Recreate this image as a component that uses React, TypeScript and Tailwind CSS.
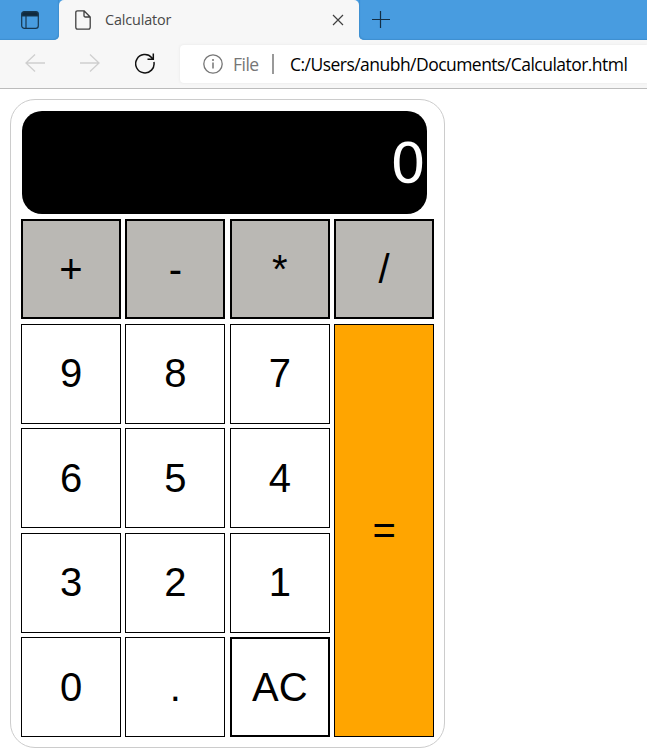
import React from "react";

type Key = { label: string; look: string };

const operator = "border-2 border-black bg-[#bab8b4]";
const plain = "border border-black bg-white";

const keys: Key[] = [
  { label: "+", look: operator },
  { label: "-", look: operator },
  { label: "*", look: operator },
  { label: "/", look: operator },
  { label: "9", look: plain },
  { label: "8", look: plain },
  { label: "7", look: plain },
  { label: "=", look: "row-span-4 border border-black bg-[#ffa500]" },
  { label: "6", look: plain },
  { label: "5", look: plain },
  { label: "4", look: plain },
  { label: "3", look: plain },
  { label: "2", look: plain },
  { label: "1", look: plain },
  { label: "0", look: plain },
  { label: ".", look: plain },
  { label: "AC", look: "border-2 border-black bg-white" },
];

function TabStrip() {
  return (
    <div className="flex h-10 bg-[#f7f7f7]">
      <div className="flex h-10 w-[59px] items-start rounded-br-[5px] bg-[#489ce0] pl-[21px] pt-[11px] shadow-[inset_-1px_-1px_1px_#3f90d0]">
        <svg width="18" height="18" viewBox="0 0 18 18" fill="none" stroke="#16364f" strokeWidth="1.2">
          <rect x="0.7" y="0.7" width="16.6" height="16.6" rx="2.6" />
          <path d="M1 5V3Q1 1 3 1H15Q17 1 17 3V5Z" fill="#10293d" />
          <path d="M5 5V17" />
        </svg>
      </div>
      <div className="h-10 w-[300px] bg-[#489ce0]">
        <div className="flex h-10 items-center rounded-t-[5px] bg-[#f7f7f7] pl-4 pr-[15px]">
          <svg width="16" height="20" viewBox="0 0 16 20" fill="none" stroke="#404040" strokeWidth="1.3" strokeLinejoin="round">
            <path d="M2.5 .8H9L15.2 7V17.3Q15.2 19.2 13.3 19.2H2.7Q.8 19.2 .8 17.3V2.5Q.8 .8 2.5 .8ZM9 .8V5.5Q9 7 10.5 7H15.2" />
          </svg>
          <span className="ml-[14px] text-[14.4px] leading-5 tracking-[-0.15px] text-[#484848]">Calculator</span>
          <svg className="ml-auto" width="12" height="12" viewBox="0 0 12 12" stroke="#404040" strokeWidth="1.2">
            <path d="M1 1L11 11M11 1L1 11" />
          </svg>
        </div>
      </div>
      <div className="flex h-10 flex-1 items-start rounded-bl-[5px] bg-[#489ce0] pl-[13px] pt-[11px] shadow-[inset_1px_-1px_1px_#3f90d0]">
        <svg width="18" height="17" viewBox="0 0 18 17" stroke="#132e44" strokeWidth="1.2">
          <path d="M0 8.5H18M8.5 0V17" />
        </svg>
      </div>
    </div>
  );
}

function AddressBar() {
  return (
    <div className="flex h-[49px] items-start border-b border-[#bcbcbc] bg-[#f7f7f7] pl-[25px]">
      <svg className="mt-[14px] shrink-0" width="20" height="18" viewBox="0 0 20 18" fill="none" stroke="#cfcfcf" strokeWidth="1.3">
        <path d="M20 9H1M10 .5L1 9L10 17.5" />
      </svg>
      <svg className="ml-[35px] mt-[14px] shrink-0" width="20" height="18" viewBox="0 0 20 18" fill="none" stroke="#cfcfcf" strokeWidth="1.3">
        <path d="M0 9H19M10 .5L19 9L10 17.5" />
      </svg>
      <svg className="ml-[35px] mt-[13px] shrink-0" width="20" height="21" viewBox="0 0 20 21" fill="none" stroke="#111" strokeWidth="1.5">
        <path d="M18.9 9A9.2 9.2 0 1 1 16.8 4.7L18 6M18.3 .5V6.3H12.5" />
      </svg>
      <div className="ml-[25px] mt-[5px] flex h-[38px] flex-1 items-center rounded-l-[4px] bg-white pl-[23px] shadow-[0_0_3px_#e4e4e4]">
        <svg className="shrink-0" width="20" height="20" viewBox="0 0 20 20" fill="none" stroke="#767676" strokeWidth="1.3">
          <circle cx="10" cy="10" r="9.2" />
          <path d="M10 8.5V14.5M10 5V7" strokeWidth="1.5" />
        </svg>
        <span className="ml-[10px] w-[39px] text-[17.5px] leading-6 tracking-[-0.5px] text-[#767676]">File</span>
        <span className="h-5 w-[2px] bg-[#999]" />
        <span className="ml-[16px] whitespace-nowrap text-[17.5px] leading-6 tracking-[-0.53px] text-black">
          C:/Users/anubh/Documents/Calculator.html
        </span>
      </div>
    </div>
  );
}

export default function App() {
  return (
    <div className="h-[753px] w-[647px] overflow-hidden bg-white font-['Open_Sans',sans-serif]">
      <TabStrip />
      <AddressBar />
      <main className="ml-[10px] mt-[10px] h-[649px] w-[435px] rounded-[25px] border border-[#cccccc] px-[10px] pt-[11px]">
        <div className="ml-px flex h-[103px] w-[405px] items-center justify-end rounded-[20px] bg-black pr-px font-['DejaVu_Sans',sans-serif] text-[56px] leading-none text-white">
          0
        </div>
        <div className="mt-[5.4px] grid grid-cols-[repeat(4,100px)] grid-rows-[repeat(5,100px)] gap-[4.4px] font-['Liberation_Sans',Arial,sans-serif]">
          {keys.map((key) => (
            <button key={key.label} className={`flex items-center justify-center pb-[0.8px] text-[40px] leading-[46px] text-black ${key.look}`}>
              {key.label}
            </button>
          ))}
        </div>
      </main>
    </div>
  );
}
